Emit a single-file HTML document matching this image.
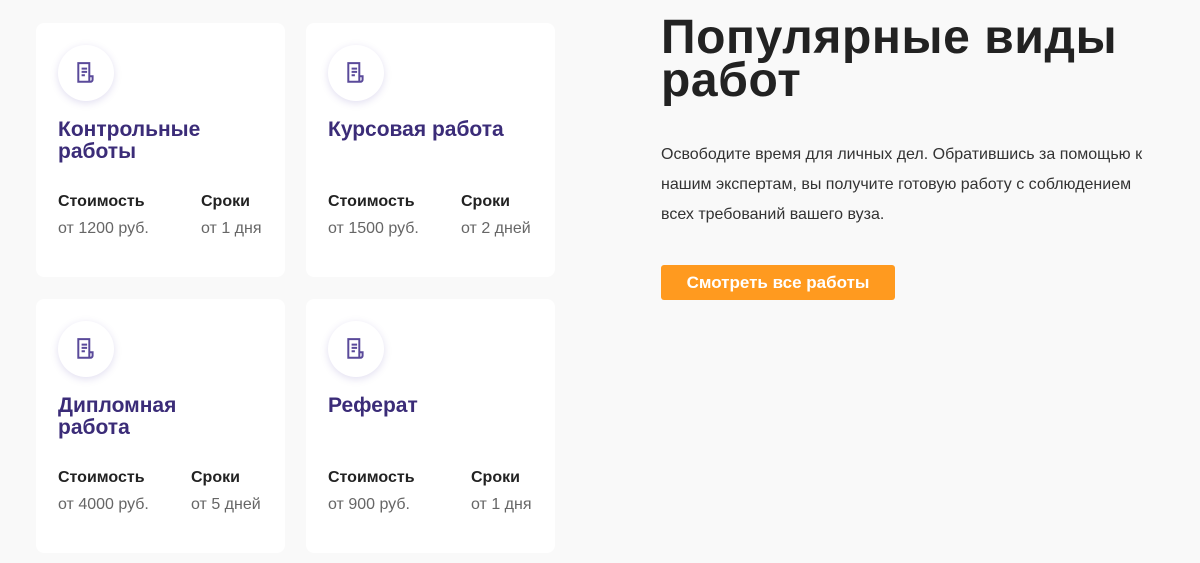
<!DOCTYPE html>
<html><head><meta charset="utf-8"><style>
*{margin:0;padding:0;box-sizing:border-box}
body{width:1200px;height:563px;background:#f9f9f9;font-family:"Liberation Sans","DejaVu Sans",sans-serif;position:relative;overflow:hidden}
.card{position:absolute;width:249px;height:254px;background:#fff;border-radius:8px}
.ic{position:absolute;left:22px;top:22px;width:56px;height:56px;border-radius:50%;background:#fff;box-shadow:0 2px 8px rgba(90,70,170,.18)}
.ic svg{position:absolute;left:18px;top:17px}
.t{position:absolute;left:22px;top:96px;font-size:21px;font-weight:bold;color:#3b2c78;line-height:22px}
.l{position:absolute;top:170px;font-size:16px;font-weight:bold;color:#222}
.v{position:absolute;top:197px;font-size:16px;color:#666}
h1{position:absolute;left:661px;top:16px;font-size:48px;line-height:43px;font-weight:bold;color:#222;letter-spacing:0.6px}
p{position:absolute;left:661px;top:140px;width:500px;font-size:16px;line-height:30px;color:#333}
.btn{position:absolute;left:661px;top:265px;width:234px;height:35px;background:#ff9a1f;border-radius:3px;color:#fff;font-weight:bold;font-size:17px;line-height:35px;text-align:center}
</style></head><body>
<div class="card" style="left:36px;top:23px"><div class="ic"><svg width="20" height="22" viewBox="0 0 18 20" fill="none" stroke="#5a4a9a" stroke-width="1.8"><path d="M2 1h10v17H2z M5 6h5 M5 9h5 M5 12h3 M12 13h3v3a2 2 0 0 1-2 2H2"/></svg></div><div class="t">Контрольные<br>работы</div><div class="l" style="left:22px">Стоимость</div><div class="l" style="left:165px">Сроки</div><div class="v" style="left:22px">от 1200 руб.</div><div class="v" style="left:165px">от 1 дня</div></div>
<div class="card" style="left:306px;top:23px"><div class="ic"><svg width="20" height="22" viewBox="0 0 18 20" fill="none" stroke="#5a4a9a" stroke-width="1.8"><path d="M2 1h10v17H2z M5 6h5 M5 9h5 M5 12h3 M12 13h3v3a2 2 0 0 1-2 2H2"/></svg></div><div class="t">Курсовая работа</div><div class="l" style="left:22px">Стоимость</div><div class="l" style="left:155px">Сроки</div><div class="v" style="left:22px">от 1500 руб.</div><div class="v" style="left:155px">от 2 дней</div></div>
<div class="card" style="left:36px;top:299px"><div class="ic"><svg width="20" height="22" viewBox="0 0 18 20" fill="none" stroke="#5a4a9a" stroke-width="1.8"><path d="M2 1h10v17H2z M5 6h5 M5 9h5 M5 12h3 M12 13h3v3a2 2 0 0 1-2 2H2"/></svg></div><div class="t">Дипломная<br>работа</div><div class="l" style="left:22px">Стоимость</div><div class="l" style="left:155px">Сроки</div><div class="v" style="left:22px">от 4000 руб.</div><div class="v" style="left:155px">от 5 дней</div></div>
<div class="card" style="left:306px;top:299px"><div class="ic"><svg width="20" height="22" viewBox="0 0 18 20" fill="none" stroke="#5a4a9a" stroke-width="1.8"><path d="M2 1h10v17H2z M5 6h5 M5 9h5 M5 12h3 M12 13h3v3a2 2 0 0 1-2 2H2"/></svg></div><div class="t">Реферат</div><div class="l" style="left:22px">Стоимость</div><div class="l" style="left:165px">Сроки</div><div class="v" style="left:22px">от 900 руб.</div><div class="v" style="left:165px">от 1 дня</div></div>
<h1>Популярные виды<br>работ</h1>
<p>Освободите время для личных дел. Обратившись за помощью к нашим экспертам, вы получите готовую работу с соблюдением всех требований вашего вуза.</p>
<div class="btn">Смотреть все работы</div>
</body></html>
